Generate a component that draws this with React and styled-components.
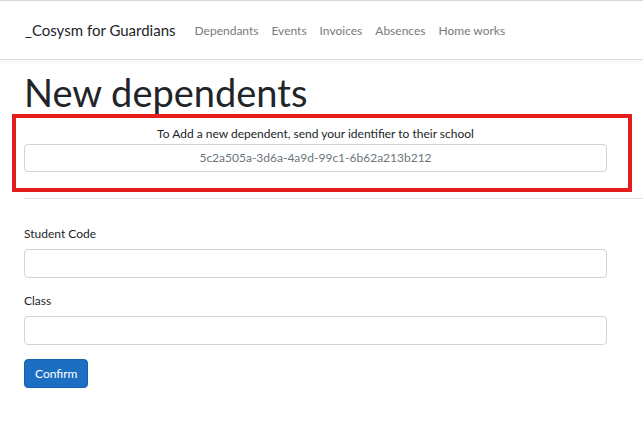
import React from 'react';
import styled, { createGlobalStyle } from 'styled-components';

const GlobalStyle = createGlobalStyle`
  html, body {
    margin: 0;
    padding: 0;
    background: #fff;
    font-family: Lato, "Open Sans", "Liberation Sans", sans-serif;
    color: #212529;
  }
  * {
    box-sizing: border-box;
  }
`;

const NAV_LINKS = ['Dependants', 'Events', 'Invoices', 'Absences', 'Home works'];

const App = () => {
  return (
    <>
      <GlobalStyle />
      <Navbar>
        <Brand>_Cosysm for Guardians</Brand>
        <NavList>
          {NAV_LINKS.map((link) => (
            <NavLink key={link}>{link}</NavLink>
          ))}
        </NavList>
      </Navbar>

      <Main>
        <Title>New dependents</Title>

        <Highlight>
          <Hint>To Add a new dependent, send your identifier to their school</Hint>
          <Identifier>5c2a505a-3d6a-4a9d-99c1-6b62a213b212</Identifier>
        </Highlight>

        <Divider />

        <Form>
          <Field>
            <Label>Student Code</Label>
            <Input type="text" />
          </Field>
          <Field>
            <Label>Class</Label>
            <Input type="text" />
          </Field>
          <Button type="button">Confirm</Button>
        </Form>
      </Main>
    </>
  );
};

const Navbar = styled.nav`
  display: flex;
  align-items: center;
  height: 60px;
  padding: 0 25px;
  border-top: 1px solid #d6d6d6;
  border-bottom: 1px solid #dcdcdc;
  box-shadow: 0 2px 6px rgba(0, 0, 0, 0.05);
  background: #fff;
`;

const Brand = styled.a`
  font-size: 15px;
  color: #212529;
  margin-right: 19px;
  white-space: nowrap;
`;

const NavList = styled.div`
  display: flex;
  gap: 13px;
`;

const NavLink = styled.a`
  font-size: 12px;
  color: #7a7a7a;
  white-space: nowrap;
`;

const Main = styled.main`
  padding: 0 36px 0 24px;
`;

const Title = styled.h1`
  margin: 10px 0 0;
  font-size: 38px;
  line-height: 44px;
  font-weight: 400;
  color: #212529;
`;

const Highlight = styled.div`
  margin: 0 -25px 0 -12px;
  padding: 7px 21px 16px 8px;
  border: 4px solid #e41d1d;
`;

const Hint = styled.div`
  font-size: 12px;
  line-height: 18px;
  text-align: center;
  margin-bottom: 1px;
`;

const Identifier = styled.div`
  height: 28px;
  line-height: 26px;
  border: 1px solid #ced4da;
  border-radius: 4px;
  text-align: center;
  font-size: 12px;
  color: #6c757d;
`;

const Divider = styled.hr`
  margin: 6px -36px 0 0;
  border: 0;
  border-top: 1px solid #e2e2e2;
`;

const Form = styled.form`
  padding-top: 26px;
`;

const Field = styled.div`
  margin-bottom: 14px;
`;

const Label = styled.label`
  display: block;
  font-size: 12px;
  line-height: 18px;
  margin-bottom: 6px;
`;

const Input = styled.input`
  display: block;
  width: 100%;
  height: 29px;
  border: 1px solid #ced4da;
  border-radius: 4px;
  padding: 0 12px;
  font-family: inherit;
  font-size: 12px;
`;

const Button = styled.button`
  display: block;
  margin-top: 13px;
  height: 29px;
  padding: 0 10px;
  font-family: inherit;
  font-size: 12px;
  color: #fff;
  background: #1b6ec2;
  border: 1px solid #1861ac;
  border-radius: 4px;
`;

export default App;
